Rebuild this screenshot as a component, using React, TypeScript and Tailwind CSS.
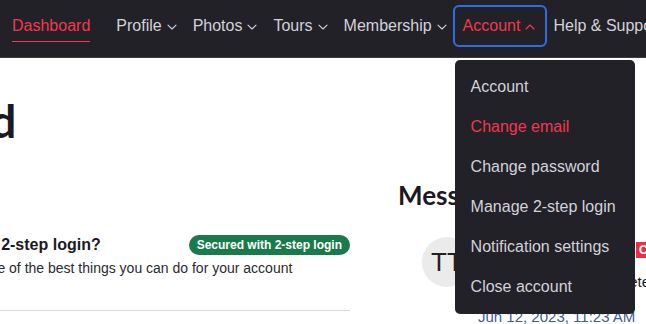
import { useState } from 'react';

const navItems = ['Profile', 'Photos', 'Tours', 'Membership'];

const accountLinks = [
  'Account',
  'Change email',
  'Change password',
  'Manage 2-step login',
  'Notification settings',
  'Close account',
];

function Chevron({ up = false }: { up?: boolean }) {
  return (
    <svg width="10" height="6" viewBox="0 0 10 6" fill="none" className="ml-[5px] mt-[1px]">
      <path
        d={up ? 'M1 5L5 1L9 5' : 'M1 1.2L5 5L9 1.2'}
        stroke="currentColor"
        strokeWidth="1.1"
        strokeLinecap="round"
        strokeLinejoin="round"
      />
    </svg>
  );
}

export default function App() {
  const [active] = useState('Change email');

  return (
    <div className="relative w-[646px] h-[324px] overflow-hidden bg-white font-['Liberation_Sans',Arial,sans-serif]">
      <nav className="h-[58px] pb-[5px] bg-[#232128] border-b border-[#3b3a42] flex items-center pl-[4px] whitespace-nowrap text-[16px] text-[#d2d2d8]">
        <a className="px-2 mr-[10px] h-[42px] flex items-center text-[#f2384d]">
          <span className="border-b border-[#f2384d] pt-[3px] pb-[3px]">Dashboard</span>
        </a>
        {navItems.map((item) => (
          <a key={item} className="px-2 h-[42px] flex items-center">
            {item}
            <Chevron />
          </a>
        ))}
        <div className="relative">
          <button className="pl-[8px] pr-[10px] h-[38px] flex items-center text-[#f2384d] rounded-[4px] outline-2 outline-[#2d6fe0]">
            Account
            <Chevron up />
          </button>
          <div className="absolute left-[0px] top-[53px] w-[180px] rounded-[5px] bg-[#232128] py-[7px] z-10">
            {accountLinks.map((link) => (
              <div
                key={link}
                className={`h-[40px] flex items-center px-[16px] ${
                  link === active ? 'text-[#f2384d]' : 'text-[#d2d2d8]'
                }`}
              >
                {link}
              </div>
            ))}
          </div>
        </div>
        <a className="px-2 h-[42px] flex items-center">Help &amp; Support</a>
      </nav>

      <main className="flex -ml-[110px]">
        <section className="w-[460px] shrink-0">
          <h1 className="-ml-[96px] mt-[35px] text-[46px] leading-[56px] font-bold text-[#1b1a22] font-['Lato',sans-serif] whitespace-nowrap">
            Dashboard
          </h1>
          <div className="mt-[84px] flex items-center justify-between">
            <h3 className="text-[16px] font-bold text-[#1b1a22]">Are you using 2-step login?</h3>
            <span className="rounded-full bg-[#1b7a4b] text-white text-[12px] font-bold px-[8px] h-[20px] flex items-center">
              Secured with 2-step login
            </span>
          </div>
          <p className="text-[14px] text-[#2a2a30] mt-[1px] whitespace-nowrap">
            Setting it up is one of the best things you can do for your account
          </p>
          <div className="mt-[31px] border-b border-[#d4dbe3]" />
        </section>

        <section className="ml-[48px] shrink-0">
          <h2 className="mt-[121px] text-[26px] leading-[32px] font-bold text-[#1b1a22] font-['Lato',sans-serif]">
            Messages
          </h2>
          <div className="mt-[26px] ml-[24px] flex items-start">
            <div className="w-[50px] h-[50px] rounded-full bg-[#ebebeb] flex items-center justify-center text-[26px] text-[#222]">
              TT
            </div>
            <div className="ml-[6px] w-[300px] text-[15px]">
              <div className="flex items-center h-[22px] mt-[2px]">
                <span className="font-bold text-[#1b1a22] w-[158px]">Tours Team</span>
                <span className="bg-[#ef2e45] text-white text-[12px] font-bold px-[3px] h-[16px] flex items-center">
                  Closed
                </span>
              </div>
              <p className="mt-[10px] text-[#1b1a22] whitespace-nowrap">Your tour is now complete</p>
              <p className="mt-[12px] text-[#3d5b9a] whitespace-nowrap">Jun 12, 2023, 11:23 AM</p>
            </div>
          </div>
        </section>
      </main>
    </div>
  );
}
